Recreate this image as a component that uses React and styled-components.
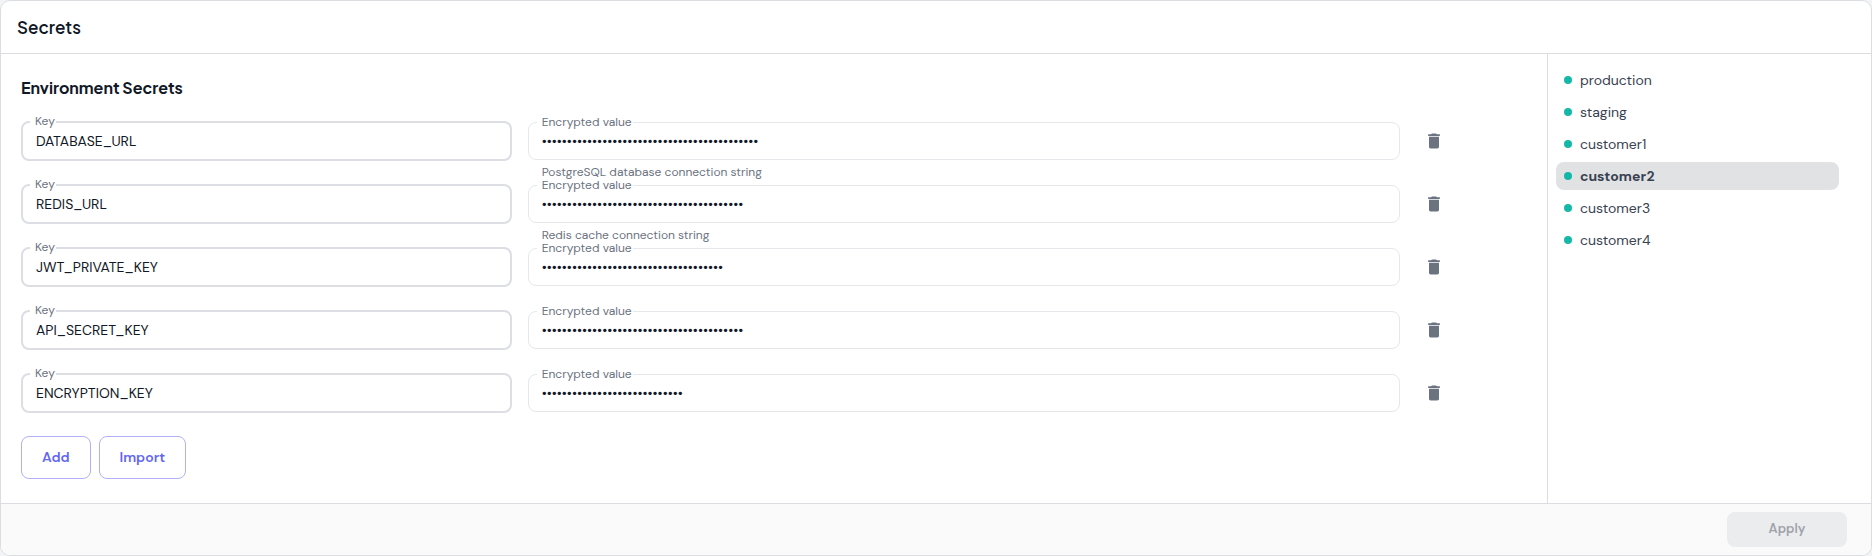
import React, { useState } from 'react'
import styled, { createGlobalStyle } from 'styled-components'
import { MdDelete } from 'react-icons/md'

const GlobalStyle = createGlobalStyle`
  * {
    box-sizing: border-box;
  }
  body {
    margin: 0;
    background: #f3f4f6;
    color: #111827;
    font-family: 'DM Sans', Inter, sans-serif;
    font-size: 14px;
  }
  button, input {
    font-family: inherit;
  }
`

const Card = styled.section`
  display: flex;
  flex-direction: column;
  min-height: 100vh;
  background: #fff;
  border: 1px solid #dcdde0;
  border-radius: 10px;
  overflow: hidden;
`

const Header = styled.header`
  padding: 16px;
  border-bottom: 1px solid #dcdde0;
`

const Title = styled.h1`
  margin: 0;
  font-family: 'Plus Jakarta Sans', 'DM Sans', Inter, sans-serif;
  font-size: 17px;
  line-height: 20px;
  font-weight: 600;
`

const Body = styled.div`
  display: flex;
  flex: 1;
`

const Main = styled.main`
  flex: 1;
  padding: 24px 20px;
`

const SectionTitle = styled.h2`
  margin: 0 0 23px;
  font-family: 'Plus Jakarta Sans', 'DM Sans', Inter, sans-serif;
  font-size: 16px;
  line-height: 20px;
  font-weight: 700;
`

const Rows = styled.div`
  display: flex;
  flex-direction: column;
`

const Row = styled.div`
  display: grid;
  grid-template-columns: 9fr 16fr 111px;
  column-gap: 16px;
  height: 63px;
`

const Field = styled.div`
  position: relative;
`

const ValueField = styled(Field)`
  padding-top: 1px;
`

const Label = styled.label`
  position: absolute;
  top: -6px;
  left: 9px;
  padding: 0 1px 0 5px;
  background: #fff;
  color: #6b7280;
  font-size: 12px;
  line-height: 12px;
`

const ValueLabel = styled(Label)`
  top: -5px;
`

const KeyInput = styled.input`
  display: block;
  width: 100%;
  height: 40px;
  padding: 0 13px;
  border: 2px solid #dcdee3;
  border-radius: 8px;
  outline: none;
  background: #fff;
  color: #111827;
  font-size: 14px;
`

const ValueInput = styled(KeyInput)`
  height: 38px;
  border: 1px solid #e5e7eb;
`

const Hint = styled.p`
  margin: 5px 14px 0;
  color: #6b7280;
  font-size: 12px;
  line-height: 14px;
`

const DeleteButton = styled.button`
  display: flex;
  align-items: center;
  justify-content: center;
  width: 36px;
  height: 39px;
  padding: 0;
  border: 0;
  background: none;
  color: #6b7280;
  cursor: pointer;
`

const Actions = styled.div`
  display: flex;
  gap: 8px;
`

const OutlineButton = styled.button`
  height: 43px;
  padding: 0 20px 2px;
  border: 1px solid #b0b1f8;
  border-radius: 8px;
  background: #fff;
  color: #6366f1;
  font-size: 14px;
  font-weight: 600;
  cursor: pointer;
`

const Sidebar = styled.nav`
  display: flex;
  flex-direction: column;
  gap: 4px;
  width: 324px;
  padding: 12px 32px 12px 8px;
  border-left: 1px solid #dcdde0;
`

const EnvButton = styled.button`
  display: flex;
  align-items: center;
  gap: 8px;
  height: 28px;
  padding: 0 8px;
  border: 0;
  border-radius: 8px;
  background: ${props => (props.$active ? '#e1e2e4' : 'transparent')};
  color: #374151;
  font-size: 14px;
  font-weight: ${props => (props.$active ? 700 : 400)};
  cursor: pointer;
`

const Dot = styled.span`
  width: 8px;
  height: 8px;
  border-radius: 50%;
  background: #14b8a6;
`

const Footer = styled.footer`
  display: flex;
  justify-content: flex-end;
  padding: 8px 24px;
  border-top: 1px solid #dcdde0;
  background: #fafafa;
`

const ApplyButton = styled.button`
  width: 120px;
  height: 35px;
  padding: 0 0 2px;
  border: 0;
  border-radius: 8px;
  background: #ebecee;
  color: #a0a2a9;
  font-size: 13px;
  font-weight: 600;
`

const initialSecrets = [
  { key: 'DATABASE_URL', length: 43, hint: 'PostgreSQL database connection string' },
  { key: 'REDIS_URL', length: 40, hint: 'Redis cache connection string' },
  { key: 'JWT_PRIVATE_KEY', length: 36 },
  { key: 'API_SECRET_KEY', length: 40 },
  { key: 'ENCRYPTION_KEY', length: 28 },
]

const environments = ['production', 'staging', 'customer1', 'customer2', 'customer3', 'customer4']

const SecretRow = ({ secret, onDelete }) => {
  const keyId = `key-${secret.key}`
  const valueId = `value-${secret.key}`
  return (
    <Row>
      <Field>
        <KeyInput id={keyId} defaultValue={secret.key} />
        <Label htmlFor={keyId}>Key</Label>
      </Field>
      <ValueField>
        <ValueInput id={valueId} type="password" defaultValue={'x'.repeat(secret.length)} />
        <ValueLabel htmlFor={valueId}>Encrypted value</ValueLabel>
        {secret.hint && <Hint>{secret.hint}</Hint>}
      </ValueField>
      <DeleteButton aria-label="Delete" onClick={onDelete}>
        <MdDelete size={20} />
      </DeleteButton>
    </Row>
  )
}

const App = () => {
  const [secrets, setSecrets] = useState(initialSecrets)
  const [active, setActive] = useState('customer2')

  return (
    <>
      <GlobalStyle />
      <Card>
        <Header>
          <Title>Secrets</Title>
        </Header>
        <Body>
          <Main>
            <SectionTitle>Environment Secrets</SectionTitle>
            <Rows>
              {secrets.map(secret => (
                <SecretRow
                  key={secret.key}
                  secret={secret}
                  onDelete={() => setSecrets(secrets.filter(s => s !== secret))}
                />
              ))}
            </Rows>
            <Actions>
              <OutlineButton>Add</OutlineButton>
              <OutlineButton>Import</OutlineButton>
            </Actions>
          </Main>
          <Sidebar>
            {environments.map(env => (
              <EnvButton key={env} $active={env === active} onClick={() => setActive(env)}>
                <Dot />
                {env}
              </EnvButton>
            ))}
          </Sidebar>
        </Body>
        <Footer>
          <ApplyButton disabled>Apply</ApplyButton>
        </Footer>
      </Card>
    </>
  )
}

export default App
